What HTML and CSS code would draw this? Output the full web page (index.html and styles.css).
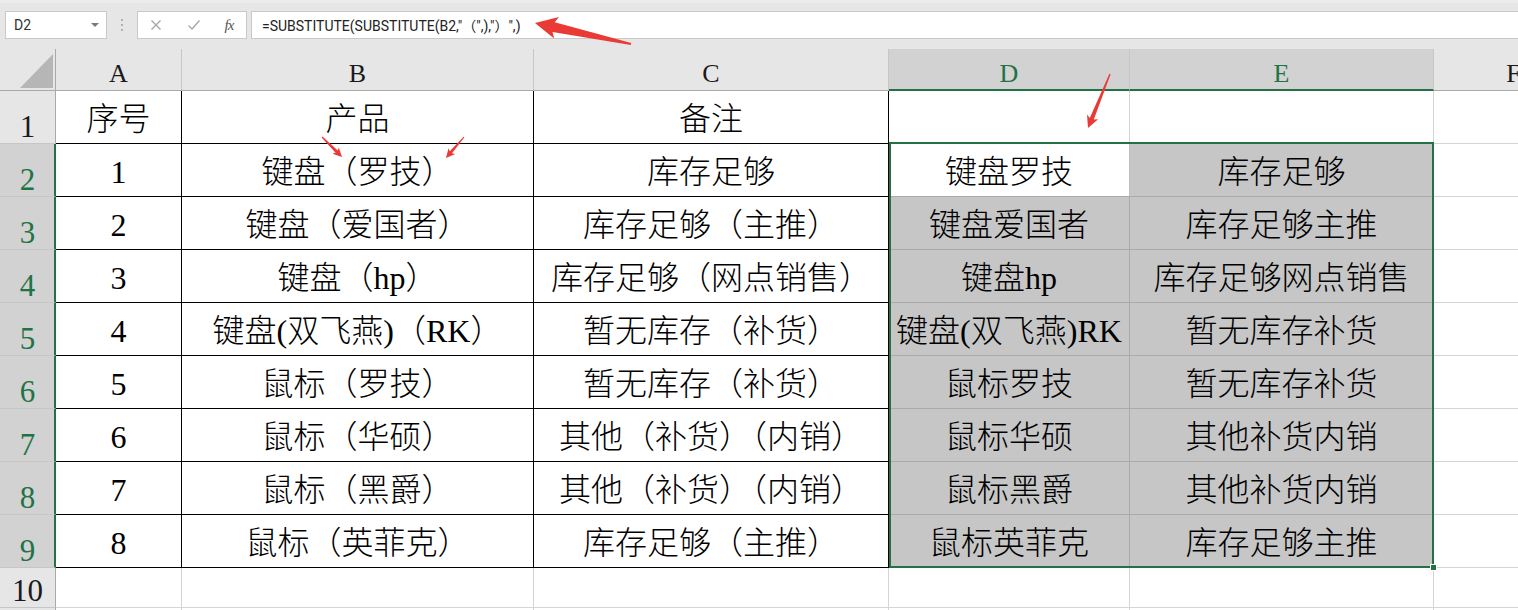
FILE: index.html
```html
<!DOCTYPE html>
<html lang="zh-CN">
<head>
<meta charset="utf-8">
<title>Sheet</title>
<link rel="stylesheet" href="styles.css">
</head>
<body>
<div class="toolbar">
  <div class="namebox"><span>D2</span><span class="caret"></span></div>
  <div class="sep"><i></i><i></i><i></i></div>
  <div class="fxbox">
    <span class="btn"><svg width="12" height="12" viewBox="0 0 12 12"><path d="M1.5 1.5L10.5 10.5M10.5 1.5L1.5 10.5" stroke="#a8a8a8" stroke-width="1.4" fill="none"/></svg></span>
    <span class="btn ok"><svg width="14" height="12" viewBox="0 0 14 12"><path d="M1.5 6.5L5 10L12.5 1.5" stroke="#a8a8a8" stroke-width="1.4" fill="none"/></svg></span>
    <span class="btn fx">fx</span>
  </div>
  <div class="formula">=SUBSTITUTE(SUBSTITUTE(B2,"（",),"）",)</div>
</div>

<div class="sheet">
  <div class="corner"><svg width="55" height="41" viewBox="0 0 55 41"><polygon points="20,39 53,39 53,5" fill="#b6b6b6"/></svg></div>
  <div class="hdr">A</div><div class="hdr">B</div><div class="hdr">C</div><div class="hdr sel">D</div><div class="hdr sel">E</div><div class="hdr">F</div>

  <div class="rh">1</div><div class="c k">序号</div><div class="c k">产品</div><div class="c k">备注</div><div class="c"></div><div class="c"></div><div class="c"></div>

  <div class="rh sel">2</div><div class="c k">1</div><div class="c k">键盘（罗技）</div><div class="c k">库存足够</div><div class="c a">键盘罗技</div><div class="c g">库存足够</div><div class="c"></div>

  <div class="rh sel">3</div><div class="c k">2</div><div class="c k">键盘（爱国者）</div><div class="c k">库存足够（主推）</div><div class="c g">键盘爱国者</div><div class="c g">库存足够主推</div><div class="c"></div>

  <div class="rh sel">4</div><div class="c k">3</div><div class="c k">键盘（hp）</div><div class="c k">库存足够（网点销售）</div><div class="c g">键盘hp</div><div class="c g">库存足够网点销售</div><div class="c"></div>

  <div class="rh sel">5</div><div class="c k">4</div><div class="c k">键盘(双飞燕)（RK）</div><div class="c k">暂无库存（补货）</div><div class="c g">键盘(双飞燕)RK</div><div class="c g">暂无库存补货</div><div class="c"></div>

  <div class="rh sel">6</div><div class="c k">5</div><div class="c k">鼠标（罗技）</div><div class="c k">暂无库存（补货）</div><div class="c g">鼠标罗技</div><div class="c g">暂无库存补货</div><div class="c"></div>

  <div class="rh sel">7</div><div class="c k">6</div><div class="c k">鼠标（华硕）</div><div class="c k">其他（补货）（内销）</div><div class="c g">鼠标华硕</div><div class="c g">其他补货内销</div><div class="c"></div>

  <div class="rh sel">8</div><div class="c k">7</div><div class="c k">鼠标（黑爵）</div><div class="c k">其他（补货）（内销）</div><div class="c g">鼠标黑爵</div><div class="c g">其他补货内销</div><div class="c"></div>

  <div class="rh sel">9</div><div class="c k">8</div><div class="c k">鼠标（英菲克）</div><div class="c k">库存足够（主推）</div><div class="c g">鼠标英菲克</div><div class="c g">库存足够主推</div><div class="c"></div>

  <div class="rh">10</div><div class="c"></div><div class="c"></div><div class="c"></div><div class="c"></div><div class="c"></div><div class="c"></div>
  <div class="rh"></div><div class="c"></div><div class="c"></div><div class="c"></div><div class="c"></div><div class="c"></div><div class="c"></div>

  <div class="selection"><span class="handle"></span></div>
</div>

<svg class="arrows" width="1518" height="610" viewBox="0 0 1518 610">
  <g fill="#ea3a35">
    <polygon points="535,23 558.9,16.9 554.7,22.2 631.2,43 630.8,45 552.5,32 554.1,38.4"/>
    <polygon points="1088,128 1098.1,119.2 1093.8,119.5 1110.6,74.3 1109.4,73.7 1089.8,117.9 1087,114.6"/>
    <polygon points="342,157 338.8,147.4 337.8,150.6 322.4,136.6 321.6,137.4 335.6,152.8 332.4,153.8"/>
    <polygon points="446,158 455.3,154.1 452,153.3 464.4,137.3 463.6,136.7 449.8,151.3 448.5,148.3"/>
  </g>
</svg>
</body>
</html>
```

FILE: styles.css
```css
* { box-sizing: border-box; }
html, body { margin: 0; padding: 0; }
body {
  width: 1518px;
  height: 610px;
  overflow: hidden;
  position: relative;
  background: #ffffff;
  font-family: "Liberation Serif", "Noto Sans CJK SC", serif;
  color: #000;
}

/* formula bar */
.toolbar {
  height: 49px;
  background: #e6e6e6;
  border-top: 3px solid #ececec;
  display: flex;
  align-items: flex-start;
  padding: 8px 0 0 5px;
}
.namebox {
  width: 102px;
  height: 28px;
  background: #fff;
  border: 1px solid #c9c9c9;
  display: flex;
  align-items: center;
  justify-content: space-between;
  padding: 0 7px 0 8px;
  font: 14px "Roboto", "Liberation Sans", sans-serif;
  color: #333;
}
.caret {
  width: 0;
  height: 0;
  border-left: 4px solid transparent;
  border-right: 4px solid transparent;
  border-top: 4px solid #7a7a7a;
}
.sep {
  width: 30px;
  height: 28px;
  display: flex;
  flex-direction: column;
  align-items: center;
  justify-content: center;
  gap: 3px;
}
.sep i {
  display: block;
  width: 2px;
  height: 2px;
  background: #b0b0b0;
}
.fxbox {
  width: 110px;
  height: 28px;
  background: #fff;
  border: 1px solid #c9c9c9;
  display: flex;
  align-items: center;
}
.btn {
  display: flex;
  align-items: center;
  justify-content: center;
  width: 36px;
  height: 26px;
}
.btn.ok { width: 40px; }
.btn.fx {
  width: 30px;
  font: italic 15px "Liberation Serif", serif;
  color: #555;
  letter-spacing: -1px;
}
.formula {
  flex: 1;
  margin-left: 4px;
  height: 28px;
  background: #fff;
  border: 1px solid #c9c9c9;
  border-right: none;
  display: flex;
  align-items: center;
  padding-left: 10px;
  font: 14px "Roboto", "Liberation Sans", "Noto Sans CJK SC", sans-serif;
  color: #222;
}

/* sheet grid */
.sheet {
  position: relative;
  display: grid;
  grid-template-columns: 56px 126px 352px 355px 241px 304px 160px;
  grid-template-rows: 42px repeat(9, 53px) 40px 20px;
  width: 1518px;
  height: 561px;
  overflow: hidden;
}
.corner {
  background: #e6e6e6;
  border-right: 1px solid #a9a9a9;
  border-bottom: 1px solid #a9a9a9;
}
.corner svg { display: block; }
.hdr {
  background: #e6e6e6;
  border-right: 1px solid #c6c6c6;
  border-bottom: 1px solid #a9a9a9;
  display: flex;
  justify-content: center;
  align-items: flex-end;
  padding-bottom: 3px;
  font-size: 26px;
  line-height: 1;
  color: #1a1a1a;
}
.hdr.sel {
  background: #d2d2d2;
  color: #217346;
  border-bottom: 2px solid #217346;
  padding-bottom: 2px;
}
.rh {
  background: #e6e6e6;
  border-right: 1px solid #a9a9a9;
  border-bottom: 1px solid #c6c6c6;
  display: flex;
  justify-content: center;
  align-items: flex-end;
  padding-bottom: 1px;
  font-size: 31px;
  line-height: 1;
  color: #1a1a1a;
}
.rh.sel {
  background: #d2d2d2;
  color: #217346;
  border-right: 2px solid #217346;
  padding-left: 1px;
}
.c {
  background: #fff;
  border-right: 1px solid #d4d4d4;
  border-bottom: 1px solid #d4d4d4;
  display: flex;
  justify-content: center;
  align-items: center;
  padding-top: 3px;
  font-size: 32px;
  font-weight: 300;
  line-height: 1;
  white-space: nowrap;
}
.c.k { border-color: #000; }
.c.g { background: #c6c6c6; border-color: #aaaaaa; }
.c.a { border-right-color: #bdbdbd; border-bottom-color: #aaaaaa; }

.selection {
  position: absolute;
  grid-column: 5 / 7;
  grid-row: 3 / 11;
  top: -2px;
  left: 0;
  right: 0;
  bottom: 0;
  border: 2px solid #217346;
  pointer-events: none;
}
.handle {
  position: absolute;
  right: -5px;
  bottom: -5px;
  width: 7px;
  height: 7px;
  background: #217346;
  border: 1px solid #fff;
}

.arrows {
  position: absolute;
  left: 0;
  top: 0;
  pointer-events: none;
}
```
